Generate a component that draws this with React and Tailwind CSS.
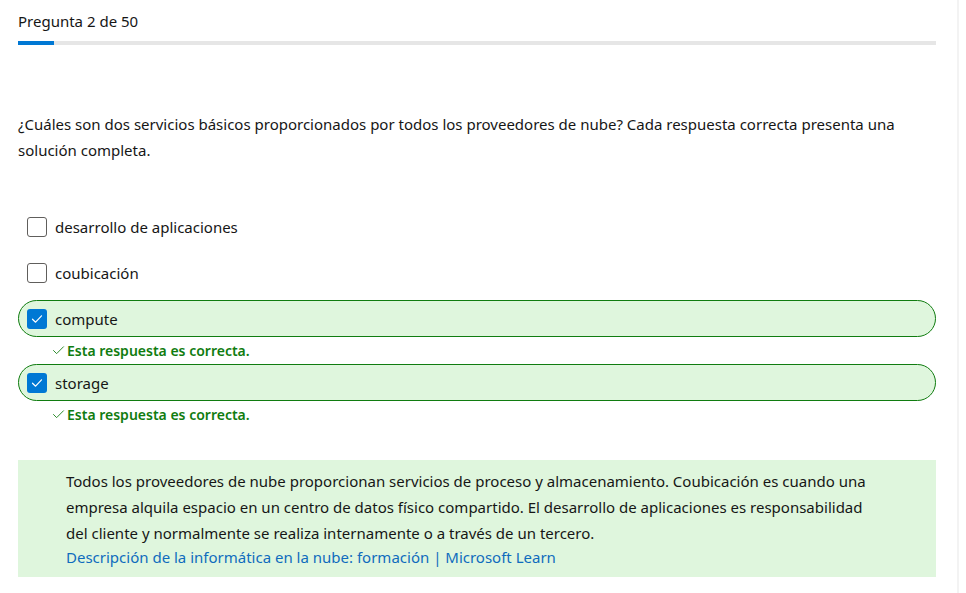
import { Check } from 'lucide-react';

const options = [
  { label: 'desarrollo de aplicaciones', checked: false },
  { label: 'coubicación', checked: false },
  { label: 'compute', checked: true },
  { label: 'storage', checked: true },
];

const Checkbox = ({ checked }) =>
  checked ? (
    <span className="w-5 h-5 rounded-[3px] bg-[#0078d4] flex items-center justify-center shrink-0">
      <svg width="14" height="14" viewBox="0 0 14 14" fill="none">
        <path d="M2.5 7.2 L5.6 10.2 L11.5 3.8" stroke="white" strokeWidth="1.2" strokeLinecap="round" strokeLinejoin="round" />
      </svg>
    </span>
  ) : (
    <span className="w-5 h-5 rounded-[3px] border border-[#605e5c] bg-white shrink-0" />
  );

const Option = ({ label, checked, afterChecked }) => {
  if (!checked) {
    return (
      <div className="mt-[8px] h-[38px] flex items-center gap-2 pl-[9px]">
        <Checkbox checked={false} />
        <span>{label}</span>
      </div>
    );
  }
  return (
    <div className={afterChecked ? '' : 'mt-[8px]'}>
      <div className="h-[37px] flex items-center gap-2 pl-[8px] rounded-[19px] border border-[#107c10] bg-[#dff6dd]">
        <Checkbox checked />
        <span>{label}</span>
      </div>
      <div className="h-[27px] flex items-center pl-[33px] text-[#107c10] font-semibold text-[14px]">
        <Check className="w-[15px] h-[15px] mr-[1px]" strokeWidth={1.4} />
        Esta respuesta es correcta.
      </div>
    </div>
  );
};

export default function App() {
  return (
    <div className="w-full h-[593px] bg-white text-[#161616] text-[15px] leading-[26px] font-['Segoe_UI','Noto_Sans',sans-serif]">
      <div className="w-[959px] h-full border-r-2 border-[#f3f3f3] pl-[18px] pr-[21px] pt-[8px] flex flex-col">
        <div>Pregunta 2 de 50</div>
        <div className="mt-[7px] h-[4px] bg-[#e6e6e6]">
          <div className="h-full w-[36px] bg-[#0078d4]" />
        </div>

        <p className="mt-[66px]">
          ¿Cuáles son dos servicios básicos proporcionados por todos los proveedores de nube? Cada respuesta correcta presenta una solución completa.
        </p>

        <div className="mt-[37px] flex flex-col">
          {options.map((o, i) => (
            <Option key={o.label} {...o} afterChecked={i > 0 && options[i - 1].checked} />
          ))}
        </div>

        <div className="mt-[32px] bg-[#dff6dd] pl-[48px] pr-[60px] pt-[8px] pb-[7px]">
          <p>
            Todos los proveedores de nube proporcionan servicios de proceso y almacenamiento. Coubicación es cuando una empresa alquila espacio en un centro de datos físico compartido. El desarrollo de aplicaciones es responsabilidad del cliente y normalmente se realiza internamente o a través de un tercero.
          </p>
          <a className="text-[#0f6cbd] leading-[22px] block pb-[2px]">
            Descripción de la informática en la nube: formación | Microsoft Learn
          </a>
        </div>
      </div>
    </div>
  );
}
